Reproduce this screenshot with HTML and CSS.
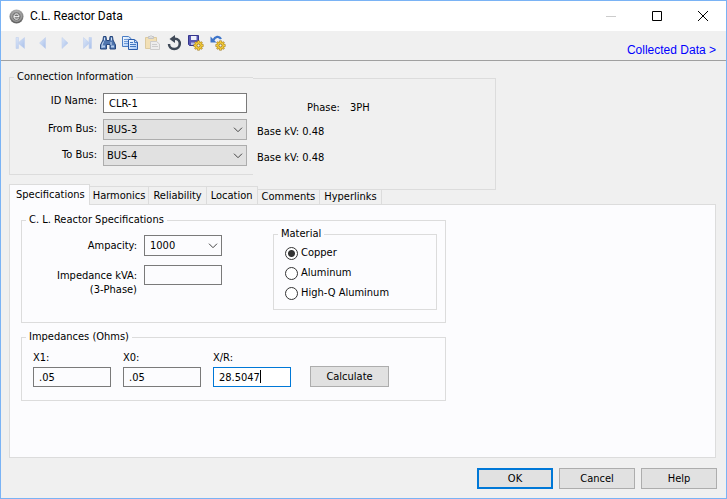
FILE: index.html
```html
<!DOCTYPE html>
<html lang="en">
<head>
<meta charset="utf-8">
<title>C.L. Reactor Data</title>
<link rel="stylesheet" href="styles.css">
</head>
<body>
<div class="window">
  <header class="titlebar">
    <svg class="app-icon" viewBox="0 0 15 15" aria-hidden="true"><defs><linearGradient id="disc" x1="0" y1="0" x2="0" y2="1"><stop offset="0" stop-color="#aaa"/><stop offset="1" stop-color="#5e5e5e"/></linearGradient></defs><circle cx="7.500" cy="7.500" r="7" fill="url(#disc)"/><circle cx="7.500" cy="7.500" r="4.800" fill="#777" stroke="#c4c4c4" stroke-width=".7"/><path d="M5 7.700h5C10 4 5 4 5 7.700c0 2.900 3.400 3.100 4.600 1.500" fill="none" stroke="#fff"/></svg>
    <h1 class="title">C.L. Reactor Data</h1>
    <div class="window-buttons">
      <button class="window-button" aria-label="Minimize" disabled><svg viewBox="0 0 12 12"><path d="M1 6.500h10" stroke="#ccc" fill="none"/></svg></button>
      <button class="window-button" aria-label="Maximize"><svg viewBox="0 0 12 12"><path d="M1.500 1.500h9v9h-9z" stroke="#000" fill="none"/></svg></button>
      <button class="window-button" aria-label="Close"><svg viewBox="0 0 12 12"><path d="M1 1l10 10M11 1L1 11" stroke="#000" fill="none"/></svg></button>
    </div>
  </header>

  <nav class="toolbar" aria-label="Tools">
    <svg class="defs" aria-hidden="true"><defs>
      <linearGradient id="pale" x1="0" y1="0" x2="1" y2="1"><stop offset="0" stop-color="#dce7f8"/><stop offset="1" stop-color="#a9c0ea"/></linearGradient>
      <linearGradient id="sheet" x1="0" y1="0" x2="1" y2="1"><stop offset="0" stop-color="#fff"/><stop offset="1" stop-color="#9cc3f5"/></linearGradient>
      <g id="gear"><path d="M10.500 5.500v10M5.500 10.500h10M7 7l7 7M14 7l-7 7" stroke="#a07714" stroke-width="2.400"/><circle cx="10.500" cy="10.500" r="3.700" fill="#f2cb3c" stroke="#b58a1c" stroke-width=".8"/><path d="M10.500 6v9M6 10.500h9M7.400 7.400l6.200 6.200M13.600 7.400l-6.200 6.200" stroke="#f2cb3c" stroke-width="1.300"/><circle cx="10.500" cy="10.500" r="1.500" fill="#f0f0f0" stroke="#8e6b18" stroke-width=".8"/></g>
    </defs></svg>
    <button class="tool" aria-label="First" disabled><svg viewBox="0 0 16 16"><path d="M4 2.500h2.500v5L12.500 2.500v11L6.500 8.500v5H4z" fill="url(#pale)" stroke="#bccdec" stroke-width=".5"/></svg></button>
    <button class="tool" aria-label="Previous" disabled><svg viewBox="0 0 16 16"><path d="M11.500 2.500v11L5.500 8z" fill="url(#pale)" stroke="#bccdec" stroke-width=".5"/></svg></button>
    <button class="tool" aria-label="Next" disabled><svg viewBox="0 0 16 16"><path d="M6 2.500v11L12 8z" fill="url(#pale)" stroke="#bccdec" stroke-width=".5"/></svg></button>
    <button class="tool" aria-label="Last" disabled><svg viewBox="0 0 16 16"><path d="M13.500 2.500H11v5L5.500 2.500v11L11 8.500v5h2.500z" fill="url(#pale)" stroke="#bccdec" stroke-width=".5"/></svg></button>
    <button class="tool" aria-label="Find"><svg viewBox="0 0 16 16"><path d="M3.500 1.500H6l.5 4h3l.5-4h2.500l.5 3.500 2.500 5v4H10V9.500H6.500V14h-6v-4L3 5z" fill="#4f75ae" stroke="#27477d"/><path d="M4.500 2.500v3M11.500 2.500v3M3.500 6.500L2 10v3M11 7v3" fill="none" stroke="#cfe0f5"/><path d="M2 11.500h3M11 11.500h3" stroke="#b4cdee" stroke-width="2"/></svg></button>
    <button class="tool" aria-label="Copy"><svg viewBox="0 0 16 16"><path d="M.5 1.500h6l2.500 2v8H.5z" fill="url(#sheet)" stroke="#4a7dc4"/><path d="M2 4.500h4M2 6.500h4M2 8.500h4" stroke="#6f9bd8"/><path d="M6.500 4.500h6l3 2.500v7.500h-9z" fill="url(#sheet)" stroke="#2b5cab"/><path d="M12.500 4.500v3h3M8 7.500h3M8 9.500h6M8 11.500h6" fill="none" stroke="#4378c2"/></svg></button>
    <button class="tool" aria-label="Paste" disabled><svg viewBox="0 0 16 16"><path d="M1.500 2.500h11v11h-11z" fill="#f2e0b6" stroke="#dccaa0"/><path d="M4.500 3.500v-2h1.500l1-1 1 1h1.500v2z" fill="#dedede" stroke="#c4c4c4"/><path d="M6.500 6.500h6l3 2.500v5.500h-9z" fill="#ededed" stroke="#ccc"/><path d="M8 9.500h5M8 11.500h6" stroke="#ccc"/></svg></button>
    <button class="tool" aria-label="Refresh"><svg viewBox="0 0 16 16"><path d="M7.500 3.700h1.500c6.500 0 6.500 10.300-.8 10.300C4.700 14 3 11.500 3 9" fill="none" stroke="#3f4957" stroke-width="2.500"/><path d="M9 0v8L3.500 4z" fill="#3f4957"/></svg></button>
    <button class="tool" aria-label="Save settings"><svg viewBox="0 0 16 16"><path d="M.5.500h10v10h-9l-1-1z" fill="#5757b5" stroke="#34348c"/><path d="M3 1h5.500v4H3z" fill="#eef0fb"/><path d="M3 7.500h5V10H3z" fill="#b9bde6"/><use href="#gear"/></svg></button>
    <button class="tool" aria-label="Restore settings"><svg viewBox="0 0 16 16"><path d="M3.500 5C5 1.500 9 .5 11 4" fill="none" stroke="#3d74c9" stroke-width="2.300"/><path d="M.5 1.500v6h6z" fill="#3d74c9"/><use href="#gear"/></svg></button>
    <a class="collected" href="#collected">Collected Data &gt;</a>
  </nav>

  <main class="content">
    <div class="connection">
      <fieldset class="group connection-fields">
        <legend>Connection Information</legend>
        <label for="id-name">ID Name:</label>
        <input id="id-name" class="field" value="CLR-1">
        <label for="from-bus">From Bus:</label>
        <span class="combo"><select id="from-bus" class="field grey"><option>BUS-3</option></select><svg viewBox="0 0 10 6" aria-hidden="true"><path d="M1 .700l4 4 4-4"/></svg></span>
        <label for="to-bus">To Bus:</label>
        <span class="combo"><select id="to-bus" class="field grey"><option>BUS-4</option></select><svg viewBox="0 0 10 6" aria-hidden="true"><path d="M1 .700l4 4 4-4"/></svg></span>
      </fieldset>
      <div class="connection-facts">
        <p class="phase"><span>Phase:</span><span>3PH</span></p>
        <p>Base kV: 0.48</p>
        <p>Base kV: 0.48</p>
      </div>
    </div>

    <div class="tabs" role="tablist">
      <button class="tab active" role="tab" aria-selected="true">Specifications</button>
      <button class="tab" role="tab">Harmonics</button>
      <button class="tab" role="tab">Reliability</button>
      <button class="tab" role="tab">Location</button>
      <button class="tab low" role="tab">Comments</button>
      <button class="tab low" role="tab">Hyperlinks</button>
    </div>

    <section class="panel" role="tabpanel">
      <fieldset class="group specs">
        <legend>C. L. Reactor Specifications</legend>
        <div class="specs-row">
          <div class="specs-fields">
            <label for="ampacity">Ampacity:</label>
            <span class="combo"><select id="ampacity" class="field"><option>1000</option></select><svg viewBox="0 0 10 6" aria-hidden="true"><path d="M1 .700l4 4 4-4"/></svg></span>
            <label for="kva">Impedance kVA:<br>(3-Phase)</label>
            <input id="kva" class="field">
          </div>
          <fieldset class="group material">
            <legend>Material</legend>
            <label><input type="radio" name="material" checked>Copper</label>
            <label><input type="radio" name="material">Aluminum</label>
            <label><input type="radio" name="material">High-Q Aluminum</label>
          </fieldset>
        </div>
      </fieldset>
      <fieldset class="group impedances">
        <legend>Impedances (Ohms)</legend>
        <div class="impedance-row">
          <div class="stack"><label for="x1">X1:</label><input id="x1" class="field" value=".05"></div>
          <div class="stack"><label for="x0">X0:</label><input id="x0" class="field" value=".05"></div>
          <div class="stack"><label for="xr">X/R:</label><input id="xr" class="field editing" value="28.5047"><span class="caret"></span></div>
          <button class="button calculate">Calculate</button>
        </div>
      </fieldset>
    </section>
  </main>

  <footer class="actions">
    <button class="button default">OK</button>
    <button class="button">Cancel</button>
    <button class="button">Help</button>
  </footer>
</div>
</body>
</html>
```
FILE: styles.css
```css
* { box-sizing: border-box; }
body { margin: 0; color: #000; font: 11px/14px "DejaVu Sans Condensed", "DejaVu Sans", sans-serif; }
button, input, select { font: inherit; color: inherit; margin: 0; }
p, h1 { margin: 0; }
svg { display: block; }

.window { display: flex; flex-direction: column; min-height: 100vh; background: #f0f0f0; border: 1px solid #7ab3f5; }

.titlebar { display: flex; align-items: center; height: 30px; padding-left: 8px; background: #fff; }
.app-icon { width: 15px; height: 15px; }
.title { flex: 1; margin-left: 6px; font: 400 12px/16px Roboto, sans-serif; }
.window-buttons { display: flex; }
.window-button { display: grid; place-items: center; width: 46px; height: 28px; padding: 0; border: 0; background: none; }
.window-button svg { width: 12px; height: 12px; }

.toolbar { display: flex; gap: 6px; height: 30px; padding: 4px 10px 0 11px; border-bottom: 1px solid #a0a0a0; }
.defs { position: absolute; width: 0; height: 0; }
.tool { width: 16px; height: 16px; padding: 0; border: 0; background: none; }
.tool svg { width: 16px; height: 16px; }
.collected { margin: 7px 0 0 auto; color: #00f; font: 12px/16px "Liberation Sans", sans-serif; text-decoration: none; }

.content { flex: 1; display: flex; flex-direction: column; padding: 9px 10px 0 8px; }
.group { min-width: 0; margin: 0; padding: 0; border: 1px solid #dcdcdc; }
.group > legend { height: 14px; margin-left: 4px; padding: 0 3px; }

.field { width: 100%; height: 20px; padding: 0 5px; border: 1px solid #7a7a7a; border-radius: 0; outline: 0; background: #fff; }
select.field { appearance: none; height: 21px; padding: 0 3px; }
.field.grey { border-color: #adadad; background: #e1e1e1; }
.combo { position: relative; }
.combo svg { position: absolute; right: 4px; top: 8px; width: 10px; height: 6px; fill: none; stroke: #444; pointer-events: none; }

.connection { display: flex; align-items: flex-start; margin-bottom: 9px; }
.connection-fields { display: grid; grid-template-columns: 87px 144px; grid-auto-rows: 21px; gap: 5px 6px; width: 244px; padding: 9px 0 8px; border-right: 0; }
.connection-fields label { padding-top: 3px; text-align: right; }
.connection-fields label:first-of-type { padding-top: 1px; }
.connection-facts { display: grid; grid-auto-rows: 21px; gap: 5px; align-items: center; width: 243px; height: 112px; margin: 8px 0 -15px; padding: 16px 4px 0; align-content: start; border: 1px solid #dcdcdc; border-left: 0; }
.phase { display: flex; gap: 10px; padding: 4px 0 0 50px; }

.tabs { display: flex; align-items: flex-end; height: 20px; }
.tab { height: 18px; padding: 0 4px; border: 1px solid #dcdcdc; border-width: 1px 1px 0 0; background: #f0f0f0; white-space: nowrap; }
.tab.low { height: 14px; border-top: 0; }
.tab.active { height: 21px; margin-bottom: -1px; padding: 0 4px 1px 6px; border-left-width: 1px; background: #fcfcfe; z-index: 1; }
.tab.active + .tab { padding: 0 3px; }

.panel { flex: 1; padding: 8px 11px; border: 1px solid #dcdcdc; background: #fcfcfe; }
.specs, .impedances { width: 425px; }
.panel .field { background: #fcfcfe; }
.specs { margin-bottom: 7px; padding-bottom: 12px; }
.specs-row { display: flex; justify-content: space-between; align-items: flex-start; padding-right: 8px; }
.specs-fields { display: grid; grid-template-columns: 115px 78px; gap: 9px 7px; padding-top: 8px; }
.specs-fields label { padding-top: 4px; text-align: right; }
.specs-fields .field { padding-left: 5px; }
.material { width: 164px; padding: 2px 0 6px; }
.material label { display: flex; align-items: center; gap: 3px; height: 20px; padding-left: 11px; }
.material input { appearance: none; width: 13px; height: 13px; border: 1px solid #333; border-radius: 50%; background: #fff; }
.material input:checked { background: radial-gradient(circle, #333 3px, #fff 4px); }

.impedance-row { display: flex; align-items: flex-end; gap: 12px; padding: 7px 11px 13px; }
.stack { position: relative; width: 78px; }
.stack label { display: block; margin-bottom: 2px; }
.stack .field { display: block; }
.panel .field.editing { border-color: #0078d7; background: #fff; }
.caret { position: absolute; left: 47px; bottom: 4px; width: 1px; height: 13px; background: #000; }

.button { width: 76px; height: 21px; padding: 0; border: 1px solid #adadad; background: #e1e1e1; }
.button.default { border: 2px solid #0078d7; }
.calculate { width: 79px; margin-left: 7px; }
.actions { display: flex; justify-content: flex-end; gap: 6px; padding: 10px 9px 9px; }
```
